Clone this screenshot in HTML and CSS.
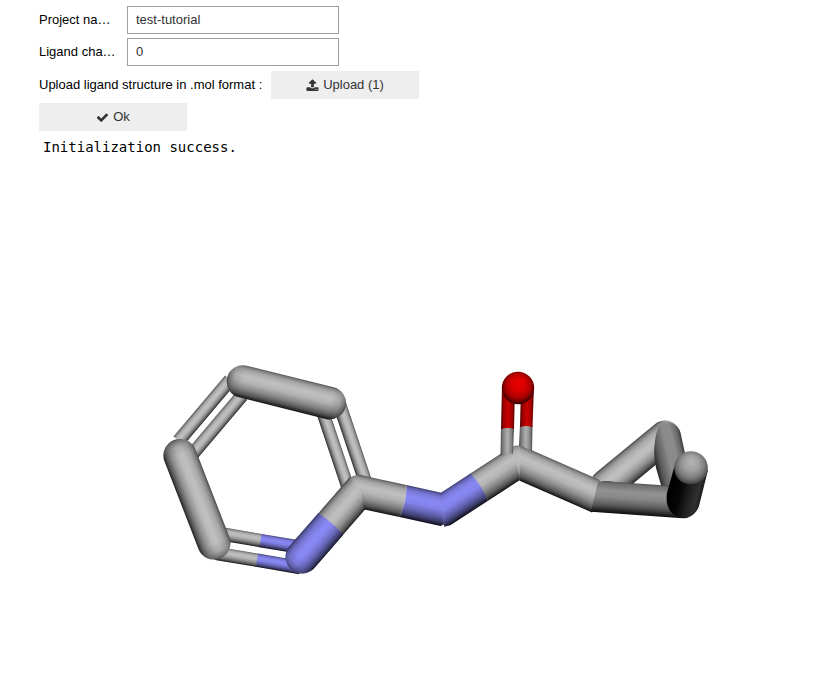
FILE: index.html
```html
<!DOCTYPE html>
<html lang="en">
<head>
<meta charset="utf-8">
<title>Ligand setup</title>
<link rel="stylesheet" href="styles.css">
</head>
<body>
<main>
  <form class="setup">
    <div class="row">
      <label class="name" for="project">Project na…</label>
      <input class="field" id="project" type="text" value="test-tutorial">
    </div>
    <div class="row">
      <label class="name" for="charge">Ligand cha…</label>
      <input class="field" id="charge" type="text" value="0">
    </div>
    <div class="row upload">
      <label class="prompt" for="upload">Upload ligand structure in .mol format :</label>
      <button class="button" id="upload" type="button">
        <svg class="icon" viewBox="0 0 1792 1792" aria-hidden="true"><path d="M1344 1472q0-26-19-45t-45-19-45 19-19 45 19 45 45 19 45-19 19-45zm256 0q0-26-19-45t-45-19-45 19-19 45 19 45 45 19 45-19 19-45zm128-224v320q0 40-28 68t-68 28h-1472q-40 0-68-28t-28-68v-320q0-40 28-68t68-28h427q21 56 70.5 92t110.5 36h256q61 0 110.5-36t70.5-92h427q40 0 68 28t28 68zm-325-648q-17 40-59 40h-256v448q0 26-19 45t-45 19h-256q-26 0-45-19t-19-45v-448h-256q-42 0-59-40-17-39 14-69l448-448q18-19 45-19t45 19l448 448q31 30 14 69z"/></svg>
        <span>Upload (1)</span>
      </button>
    </div>
    <div class="row">
      <button class="button" type="button">
        <svg class="icon" viewBox="0 0 1792 1792" aria-hidden="true"><path d="M1671 566q0 40-28 68l-724 724-136 136q-28 28-68 28t-68-28l-136-136-362-362q-28-28-28-68t28-68l136-136q28-28 68-28t68 28l294 295 656-657q28-28 68-28t68 28l136 136q28 28 28 68z"/></svg>
        <span>Ok</span>
      </button>
    </div>
  </form>
  <pre class="output">Initialization success.</pre>

  <svg class="molecule" viewBox="0 160 825 440" role="img" aria-label="Ligand structure">
    <defs>
      <!-- Lit from above: across a near-horizontal stick -->
      <linearGradient id="c" x1="0" y1="0" x2="0" y2="1">
        <stop offset="0" stop-color="#555"/><stop offset=".06" stop-color="#858585"/><stop offset=".15" stop-color="#a8a8a8"/><stop offset=".32" stop-color="#c0c0c0"/><stop offset=".5" stop-color="#b4b4b4"/><stop offset=".7" stop-color="#8a8a8a"/><stop offset=".87" stop-color="#555"/><stop offset="1" stop-color="#111"/>
      </linearGradient>
      <linearGradient id="n" x1="0" y1="0" x2="0" y2="1">
        <stop offset="0" stop-color="#3c3c6c"/><stop offset=".06" stop-color="#5f5fae"/><stop offset=".15" stop-color="#7979d8"/><stop offset=".32" stop-color="#8989f5"/><stop offset=".5" stop-color="#8282e9"/><stop offset=".7" stop-color="#6363b2"/><stop offset=".87" stop-color="#3c3c6c"/><stop offset="1" stop-color="#0c0c16"/>
      </linearGradient>
      <!-- Across a steep stick -->
      <linearGradient id="cs" x1="0" y1="0" x2="0" y2="1">
        <stop offset="0" stop-color="#484848"/><stop offset=".08" stop-color="#808080"/><stop offset=".2" stop-color="#a8a8a8"/><stop offset=".4" stop-color="#c0c0c0"/><stop offset=".55" stop-color="#bababa"/><stop offset=".75" stop-color="#909090"/><stop offset=".9" stop-color="#5a5a5a"/><stop offset="1" stop-color="#222"/>
      </linearGradient>
      <linearGradient id="ns" x1="0" y1="0" x2="0" y2="1">
        <stop offset="0" stop-color="#343460"/><stop offset=".08" stop-color="#5c5ca6"/><stop offset=".2" stop-color="#7878d6"/><stop offset=".4" stop-color="#8a8af8"/><stop offset=".55" stop-color="#8585ee"/><stop offset=".75" stop-color="#6868ba"/><stop offset=".9" stop-color="#404074"/><stop offset="1" stop-color="#18182c"/>
      </linearGradient>
      <!-- Falloff over the rounded stick ends -->
      <linearGradient id="ends">
        <stop offset="0" stop-opacity=".6"/><stop offset=".02" stop-opacity=".35"/><stop offset=".06" stop-opacity=".12"/><stop offset=".13" stop-opacity="0"/><stop offset=".87" stop-opacity="0"/><stop offset=".94" stop-opacity=".12"/><stop offset=".98" stop-opacity=".35"/><stop offset="1" stop-opacity=".6"/>
      </linearGradient>
      <linearGradient id="cv">
        <stop offset="0" stop-color="#444"/><stop offset=".15" stop-color="#777"/><stop offset=".5" stop-color="#b0b0b0"/><stop offset=".8" stop-color="#888"/><stop offset="1" stop-color="#444"/>
      </linearGradient>
      <linearGradient id="ov">
        <stop offset="0" stop-color="#400"/><stop offset=".18" stop-color="#980000"/><stop offset=".5" stop-color="#cc0000"/><stop offset=".8" stop-color="#a00000"/><stop offset="1" stop-color="#400"/>
      </linearGradient>
      <linearGradient id="dim" x1="0" y1="0" x2="0" y2="1">
        <stop offset="0" stop-color="#484848"/><stop offset=".08" stop-color="#707070"/><stop offset=".3" stop-color="#929292"/><stop offset=".5" stop-color="#888"/><stop offset=".75" stop-color="#5a5a5a"/><stop offset="1" stop-color="#0a0a0a"/>
      </linearGradient>
      <linearGradient id="dims" gradientUnits="userSpaceOnUse" x1="655" y1="460" x2="685" y2="453">
        <stop offset="0" stop-color="#2c2c2c"/><stop offset=".15" stop-color="#5a5a5a"/><stop offset=".45" stop-color="#8a8a8a"/><stop offset=".7" stop-color="#8c8c8c"/><stop offset=".9" stop-color="#686868"/><stop offset="1" stop-color="#3a3a3a"/>
      </linearGradient>
      <linearGradient id="dark" gradientUnits="userSpaceOnUse" x1="670" y1="486" x2="702" y2="494">
        <stop offset="0" stop-color="#000"/><stop offset=".35" stop-color="#060606"/><stop offset=".7" stop-color="#252525"/><stop offset=".88" stop-color="#303030"/><stop offset="1" stop-color="#1a1a1a"/>
      </linearGradient>
      <radialGradient id="cb" cx=".5" cy=".47" r=".54" fx=".54" fy=".36">
        <stop offset="0" stop-color="#c0c0c0"/><stop offset=".4" stop-color="#b6b6b6"/><stop offset=".7" stop-color="#999"/><stop offset=".9" stop-color="#6c6c6c"/><stop offset="1" stop-color="#3c3c3c"/>
      </radialGradient>
      <radialGradient id="tip" cx=".5" cy=".44" r=".57" fx=".52" fy=".3">
        <stop offset="0" stop-color="#b4b4b4"/><stop offset=".4" stop-color="#a0a0a0"/><stop offset=".7" stop-color="#7c7c7c"/><stop offset=".9" stop-color="#505050"/><stop offset="1" stop-color="#222"/>
      </radialGradient>
      <radialGradient id="ob" cx=".5" cy=".46" r=".55" fx=".52" fy=".34">
        <stop offset="0" stop-color="#ec0000"/><stop offset=".4" stop-color="#d80000"/><stop offset=".7" stop-color="#a80000"/><stop offset=".9" stop-color="#600000"/><stop offset="1" stop-color="#200000"/>
      </radialGradient>
    </defs>

    <!-- Pyridine ring, double bonds -->
    <rect x="4" width="80" height="13.4" y="-6.7" fill="url(#cs)" transform="translate(176 444) rotate(-49.8)"/>
    <rect width="76" height="13.4" y="-6.7" fill="url(#cs)" transform="translate(193 453.5) rotate(-49.8)"/>
    <rect width="82" height="13" y="-6.5" fill="url(#cs)" transform="translate(322 410) rotate(71.5)"/>
    <rect width="88" height="13.4" y="-6.7" fill="url(#cs)" transform="translate(339 403) rotate(71.5)"/>
    <g transform="translate(220 533.7) rotate(9.6)">
      <rect width="41.5" height="13.4" y="-6.7" fill="url(#c)"/>
      <rect x="41" width="40" height="13.4" y="-6.7" fill="url(#n)"/>
    </g>
    <g transform="translate(216 553.3) rotate(9.6)">
      <rect width="42" height="13.4" y="-6.7" fill="url(#c)"/>
      <rect x="41.5" width="44" height="13.4" y="-6.7" fill="url(#n)"/>
    </g>

    <!-- Pyridine ring, single bonds -->
    <g transform="translate(243 381.5) rotate(14)">
      <rect x="-16.3" y="-16.3" width="122" height="32.6" rx="16.3" fill="url(#c)"/>
      <rect x="-16.3" y="-16.3" width="122" height="32.6" rx="16.3" fill="url(#ends)"/>
    </g>
    <g transform="translate(180 455.5) rotate(68.8)">
      <rect x="-16.6" y="-16.6" width="127" height="33.2" rx="16.6" fill="url(#cs)"/>
      <rect x="-16.6" y="-16.6" width="127" height="33.2" rx="16.6" fill="url(#ends)"/>
    </g>

    <!-- Amide chain -->
    <circle cx="359" cy="491.5" r="16.4" fill="url(#cb)"/>
    <g transform="translate(302 557) rotate(-49)">
      <path d="M43.500-16.400H92L78 16.400H43.500Q45 0 43.500-16.400Z" fill="url(#cs)"/>
      <path d="M0-16.600H44Q46 0 44 16.600H0A16.600 16.600 0 0 1 0-16.600Z" fill="url(#ns)"/>
      <rect x="-16.6" y="-16.6" width="127" height="33.2" rx="16.6" fill="url(#ends)" clip-path="inset(0 80px 0 0)"/>
    </g>
    <g transform="translate(359 491.5) rotate(12.3)">
      <path d="M-6-16.400H45Q49 0 45 16.400H9Z" fill="url(#c)"/>
      <path d="M45-16.400H82L90 14L87 16.400H45Q49 0 45-16.400Z" fill="url(#n)"/>
    </g>
    <circle cx="518" cy="462" r="16.5" fill="url(#cb)"/>
    <g transform="translate(444 510) rotate(-33)">
      <path d="M41.500-16.200H92L80 16.200H42Q44 0 41.500-16.200Z" fill="url(#c)"/>
      <path d="M6-16.200H42Q45 0 42 16.200H-3L-9 14Z" fill="url(#n)"/>
    </g>

    <!-- Cyclopropyl group -->
    <rect width="108" height="32" y="-16" rx="16" fill="url(#cs)" transform="translate(594 495) rotate(-39.5)"/>
    <path d="M-5-16.400H82L90 0L88 16.400H9Z" fill="url(#c)" transform="translate(518 462) rotate(23.7)"/>
    <path d="M659 427Q663 422 669 422Q679 424 681 435L690 476L684 492H663L656 468Q653 452 655 441Q656 432 659 427Z" fill="url(#dims)"/>
    <path d="M3-14Q10-17 20-15.500H90V16H-2Z" fill="url(#dim)" transform="translate(594 496) rotate(4)"/>
    <path d="M674.500 466L667 493Q665 507 673 514Q679 519 687 518Q696 515 699 506L708 470Z" fill="url(#dark)"/>
    <circle cx="691" cy="468" r="16.8" fill="url(#tip)"/>

    <!-- Carbonyl -->
    <path d="M501 427H514L513 454Q506 452 500.500 456Z" fill="url(#cv)"/>
    <path d="M520 425H532.500L532 452Q526 447 519 446Z" fill="url(#cv)"/>
    <path d="M502 386H515L514 429Q508 427 501 429Z" fill="url(#ov)"/>
    <path d="M521 386H534L532.500 427Q526 425 520 427Z" fill="url(#ov)"/>
    <circle cx="518" cy="388" r="16.2" fill="url(#ob)"/>
  </svg>
</main>
</body>
</html>
```
FILE: styles.css
```css
* {
  box-sizing: border-box;
}

body {
  margin: 0;
  background: #fff;
  color: #000;
  font: 13px/28px "Liberation Sans", Arial, sans-serif;
}

.setup {
  display: flex;
  flex-direction: column;
  gap: 4px;
  padding: 6px 39px 0;
}

.row {
  display: flex;
  align-items: center;
  gap: 4px;
}

.upload {
  padding-top: 1px;
}

.name {
  width: 84px;
  white-space: nowrap;
}

.prompt {
  min-width: 228px;
}

.field {
  width: 212px;
  height: 28px;
  padding: 0 8px;
  border: 1px solid #9e9e9e;
  border-radius: 0;
  background: #fff;
  color: #333;
  font: inherit;
}

.button {
  display: flex;
  align-items: center;
  justify-content: center;
  gap: 4px;
  width: 148px;
  height: 28px;
  padding: 0;
  border: 0;
  background: #eee;
  color: #333;
  font: inherit;
}

.icon {
  width: 13px;
  height: 13px;
  fill: currentColor;
}

.output {
  margin: 8px 43px 4px;
  font: 14px/17px "DejaVu Sans Mono", monospace;
}

.molecule {
  display: block;
  width: 100%;
  height: auto;
}
```
